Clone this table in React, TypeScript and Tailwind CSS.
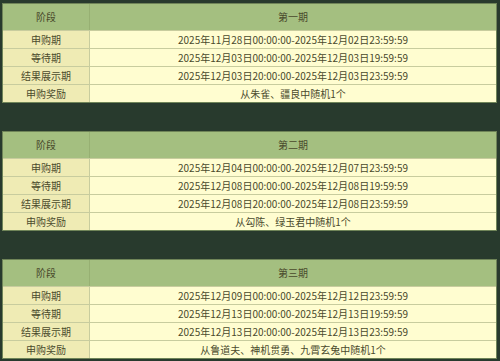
import React from 'react';

interface Phase {
    title: string;
    rows: [string, string][];
}

const phases: Phase[] = [
    {
        title: '第一期',
        rows: [
            ['申购期', '2025年11月28日00:00:00-2025年12月02日23:59:59'],
            ['等待期', '2025年12月03日00:00:00-2025年12月03日19:59:59'],
            ['结果展示期', '2025年12月03日20:00:00-2025年12月03日23:59:59'],
            ['申购奖励', '从朱雀、疆良中随机1个'],
        ],
    },
    {
        title: '第二期',
        rows: [
            ['申购期', '2025年12月04日00:00:00-2025年12月07日23:59:59'],
            ['等待期', '2025年12月08日00:00:00-2025年12月08日19:59:59'],
            ['结果展示期', '2025年12月08日20:00:00-2025年12月08日23:59:59'],
            ['申购奖励', '从勾陈、绿玉君中随机1个'],
        ],
    },
    {
        title: '第三期',
        rows: [
            ['申购期', '2025年12月09日00:00:00-2025年12月12日23:59:59'],
            ['等待期', '2025年12月13日00:00:00-2025年12月13日19:59:59'],
            ['结果展示期', '2025年12月13日20:00:00-2025年12月13日23:59:59'],
            ['申购奖励', '从鲁道夫、神机贯勇、九霄玄兔中随机1个'],
        ],
    },
];

const PhaseTable: React.FC<{ phase: Phase }> = ({ phase }) => (
    <div className="border border-[#6f8458] grid grid-cols-[87px_1fr] text-[10px] leading-none text-[#4a4a2c]">
        {/* header */}
        <div className="h-[26px] flex items-center justify-center bg-[#a4bf80] border-r border-[#97b073]">阶段</div>
        <div className="h-[26px] flex items-center justify-center bg-[#a4bf80]">{phase.title}</div>
        {phase.rows.map(([label, value], i) => (
            <React.Fragment key={i}>
                <div className="h-[18px] flex items-center justify-center bg-[#efebb4] border-r border-t border-[#c8cc9e]">
                    {label}
                </div>
                <div className="h-[18px] flex items-center justify-center bg-[#fffdd0] border-t border-[#c8cc9e]">
                    {value}
                </div>
            </React.Fragment>
        ))}
    </div>
);

export default function App() {
    return (
        <div
            className="w-[500px] h-[361px] bg-[#283a2d] pt-[3px] pl-[2px] pr-[3px] flex flex-col gap-[28px]"
            style={{ fontFamily: '"Noto Sans CJK SC", "Noto Sans", sans-serif' }}
        >
            {phases.map((p) => (
                <PhaseTable key={p.title} phase={p} />
            ))}
        </div>
    );
}
